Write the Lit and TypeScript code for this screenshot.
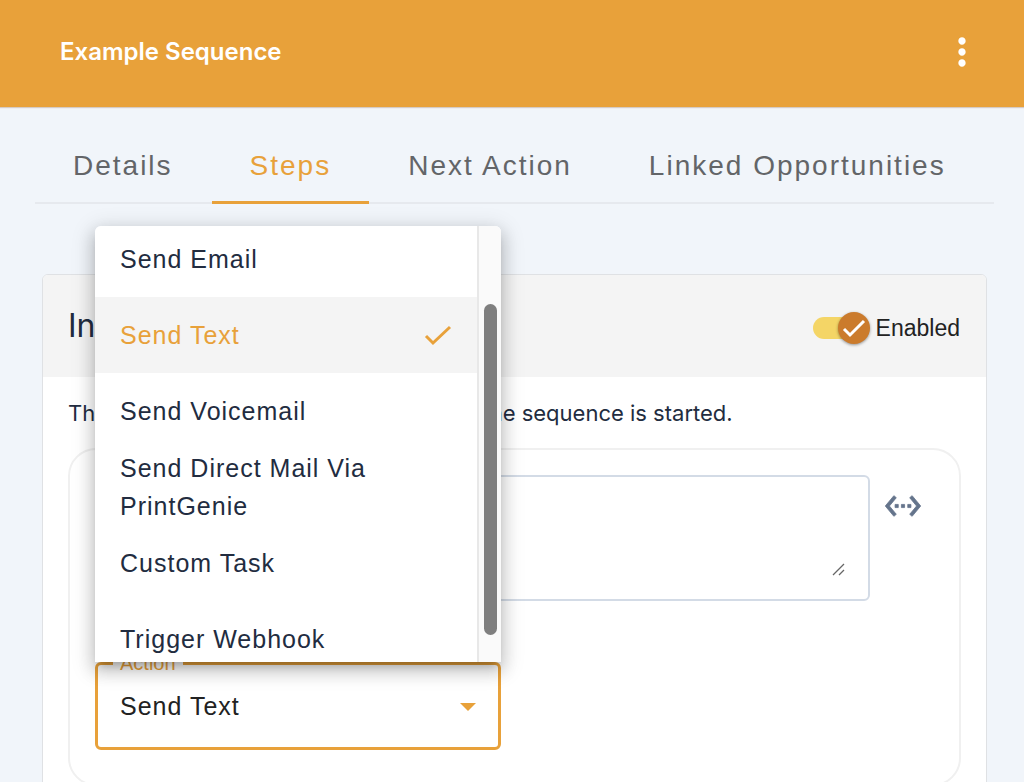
import { LitElement, html, css } from "lit";
import { customElement, state } from "lit/decorators.js";
import { classMap } from "lit/directives/class-map.js";

const TABS = ["Details", "Steps", "Next Action", "Linked Opportunities"];

const ACTIONS = [
  "Send Email",
  "Send Text",
  "Send Voicemail",
  "Send Direct Mail Via PrintGenie",
  "Custom Task",
  "Trigger Webhook",
];

@customElement("app-root")
export class AppRoot extends LitElement {
  @state() private tab = "Steps";
  @state() private action = "Send Text";
  @state() private enabled = true;

  static styles = css`
    :host {
      display: block;
      height: 100vh;
      overflow: hidden;
      background: #f1f5fa;
      color: #222c40;
      font-family: "Liberation Sans", Arial, sans-serif;
      font-size: 22px;
    }
    * {
      box-sizing: border-box;
    }
    button {
      font: inherit;
      color: inherit;
      border: 0;
      padding: 0;
      background: none;
      cursor: pointer;
    }
    h1,
    h2,
    p {
      margin: 0;
    }
    svg {
      display: block;
    }
    .bar {
      display: flex;
      align-items: center;
      justify-content: space-between;
      height: 107px;
      padding: 0 40px 4px 60px;
      background: #e8a13a;
      color: #fff;
      box-shadow: 0 1px 1px #d5cbc5;
    }
    .title {
      font-family: Inter, "Liberation Sans", sans-serif;
      font-size: 24px;
      line-height: 32px;
      font-weight: 600;
    }
    .tabs {
      display: flex;
      gap: 1px;
      margin: 21px 30px 0 35px;
      border-bottom: 2px solid #e6e9ee;
    }
    .tab {
      height: 76px;
      margin-bottom: -2px;
      padding: 3px 38px 0;
      border-bottom: 3px solid transparent;
      color: #636568;
      font-size: 28px;
      letter-spacing: 2px;
      white-space: nowrap;
    }
    .tab.active {
      color: #e8a13a;
      border-bottom-color: #e8a13a;
    }
    .panel {
      margin: 70px 37px 0 42px;
      border: 1px solid #dfe1e4;
      border-radius: 6px;
      background: #fff;
    }
    .panel-head {
      display: flex;
      align-items: center;
      justify-content: space-between;
      height: 102px;
      padding: 4px 26px 0 25px;
      border-radius: 5px 5px 0 0;
      background: #f4f4f4;
    }
    .panel-title {
      font-family: Inter, "Liberation Sans", sans-serif;
      font-size: 32px;
      line-height: 40px;
      padding-bottom: 4px;
      font-weight: 400;
    }
    .switch {
      display: flex;
      align-items: center;
      gap: 6px;
      color: #222;
      font-size: 23px;
      cursor: pointer;
    }
    .track {
      position: relative;
      display: flex;
      margin-right: 5px;
    }
    .toggle {
      appearance: none;
      width: 52px;
      height: 22px;
      margin: 0;
      border-radius: 11px;
      background: #f4d566;
    }
    .knob {
      position: absolute;
      right: -5px;
      top: -5px;
      width: 32px;
      height: 32px;
      padding: 3px;
      border-radius: 50%;
      background: #cb7b2c;
      box-shadow: 0 1px 3px rgba(0, 0, 0, 0.4);
      pointer-events: none;
    }
    .knob.off {
      right: 25px;
    }
    .panel-body {
      padding: 20px 25px 26px;
    }
    .note {
      font-family: Inter, "Liberation Sans", sans-serif;
      line-height: 32px;
      white-space: nowrap;
    }
    .step {
      margin-top: 19px;
      padding: 25px 25px 34px;
      border: 2px solid #f0f0f0;
      border-radius: 28px;
    }
    .message {
      display: flex;
      align-items: flex-start;
      gap: 14px;
    }
    .text-box {
      position: relative;
      display: flex;
      flex: 1;
    }
    textarea {
      width: 100%;
      height: 126px;
      padding: 20px 26px;
      border: 2px solid #d3dbe6;
      border-radius: 6px;
      background: #fff;
      font: inherit;
      color: inherit;
      resize: none;
      outline: 0;
    }
    .grip {
      position: absolute;
      right: 25px;
      bottom: 25px;
      pointer-events: none;
    }
    .merge {
      margin: 12px 12px 0 0;
      color: #64748b;
    }
    .field {
      position: relative;
      width: 406px;
      margin-top: 61px;
    }
    .field-label {
      position: absolute;
      left: 18px;
      top: -10px;
      padding: 0 7px;
      background: #fff;
      color: #e8a13a;
      font-size: 20px;
      line-height: 22px;
    }
    select {
      display: block;
      appearance: none;
      width: 100%;
      height: 88px;
      padding: 0 60px 0 22px;
      border: 3px solid #e8a13a;
      border-radius: 6px;
      background: #fff;
      color: #222;
      font: inherit;
      font-size: 25px;
      letter-spacing: 1px;
      outline: 0;
    }
    .caret {
      position: absolute;
      right: 25px;
      top: 41px;
      pointer-events: none;
    }
    .menu {
      position: absolute;
      left: 0;
      bottom: 88px;
      display: flex;
      width: 100%;
      height: 436px;
      overflow: hidden;
      border-radius: 6px 6px 0 0;
      background: #fff;
    }
    .menu-shadow {
      position: absolute;
      left: 0;
      bottom: 88px;
      width: 100%;
      height: 436px;
      border-radius: 6px 6px 0 0;
      box-shadow:
        0 8px 8px -5px rgba(0, 0, 0, 0.2),
        0 8px 16px 2px rgba(0, 0, 0, 0.14),
        0 5px 22px 4px rgba(0, 0, 0, 0.12);
    }
    .options {
      flex: 1;
      overflow: hidden;
    }
    .option {
      display: flex;
      align-items: center;
      justify-content: space-between;
      width: 100%;
      height: 76px;
      padding: 0 25px;
      font-size: 25px;
      line-height: 38px;
      letter-spacing: 1px;
      text-align: left;
    }
    .option.selected {
      background: #f4f4f4;
      color: #e8a13a;
    }
    .scroll {
      width: 24px;
      padding: 78px 5px 27px;
      border-left: 2px solid #e8e8e8;
      background: #fafafa;
    }
    .thumb {
      height: 331px;
      width: 13px;
      border-radius: 7px;
      background: #7f7f7f;
    }
  `;

  firstUpdated() {
    this.renderRoot.querySelector(".options")!.scrollTop = 5;
  }

  render() {
    return html`
      <header class="bar">
        <h1 class="title">Example Sequence</h1>
        <button aria-label="More options">
          <svg width="44" height="44" viewBox="0 0 24 24" fill="currentColor">
            <path
              d="M12 8c1.100 0 2-.9 2-2s-.9-2-2-2-2 .9-2 2 .9 2 2 2zm0 2c-1.100 0-2 .9-2 2s.9 2 2 2 2-.9 2-2-.9-2-2-2zm0 6c-1.100 0-2 .9-2 2s.9 2 2 2 2-.9 2-2-.9-2-2-2z"
            />
          </svg>
        </button>
      </header>
      <nav class="tabs" role="tablist">
        ${TABS.map(
          (t) => html`<button
            role="tab"
            aria-selected=${t === this.tab}
            class=${classMap({ tab: true, active: t === this.tab })}
            @click=${() => (this.tab = t)}
          >${t}</button>`
        )}
      </nav>
      <section class="panel">
        <div class="panel-head">
          <h2 class="panel-title">Initial</h2>
          <label class="switch">
            <span class="track">
              <input
                class="toggle"
                type="checkbox"
                .checked=${this.enabled}
                @change=${() => (this.enabled = !this.enabled)}
              />
              <span class=${classMap({ knob: true, off: !this.enabled })}>
                <svg width="26" height="26" viewBox="0 0 26 26" fill="none" stroke="#fff" stroke-width="3">
                  <path d="M3 14l6 6L23 6" />
                </svg>
              </span>
            </span>
            Enabled
          </label>
        </div>
        <div class="panel-body">
          <p class="note">This is the first action, and it runs when the sequence is started.</p>
          <div class="step">
            <div class="message">
              <div class="text-box">
                <textarea aria-label="Message"></textarea>
                <svg class="grip" width="13" height="13" viewBox="0 0 13 13" stroke="#666" stroke-width="1.300">
                  <path d="M1 12L12 1M7 12l5-5" />
                </svg>
              </div>
              <button class="merge" aria-label="Insert merge field">
                <svg
                  width="38"
                  height="38"
                  viewBox="0 0 24 24"
                  fill="currentColor"
                  stroke="currentColor"
                  stroke-width="0.500"
                >
                  <path
                    d="M7.770 6.760L6.230 5.480.820 12l5.410 6.520 1.540-1.280L3.420 12l4.350-5.240zM7 13h2v-2H7v2zm10-2h-2v2h2v-2zm-6 2h2v-2h-2v2zm6.770-7.520l-1.540 1.280L20.580 12l-4.350 5.240 1.540 1.280L23.180 12l-5.410-6.520z"
                  />
                </svg>
              </button>
            </div>
            <div class="field">
              <select id="action" .value=${this.action}>
                ${ACTIONS.map(
                  (a) => html`<option ?selected=${a === this.action}>${a}</option>`
                )}
              </select>
              <label class="field-label" for="action">Action</label>
              <svg class="caret" width="16" height="8" viewBox="0 0 16 8" fill="#e8a13a">
                <path d="M0 0h16L8 8z" />
              </svg>
              <div class="menu-shadow"></div>
              <div class="menu">
                <div class="options" role="listbox" aria-label="Action">
                  ${ACTIONS.map(
                    (a) => html`<button
                      role="option"
                      aria-selected=${a === this.action}
                      class=${classMap({ option: true, selected: a === this.action })}
                      @click=${() => (this.action = a)}
                    >
                      <span>${a}</span>
                      ${a === this.action
                        ? html`<svg width="28" height="21" viewBox="0 0 28 21" fill="none" stroke="currentColor" stroke-width="3">
                            <path d="M2 11l7 7L26 2" />
                          </svg>`
                        : ""}
                    </button>`
                  )}
                </div>
                <div class="scroll"><div class="thumb"></div></div>
              </div>
            </div>
          </div>
        </div>
      </section>
    `;
  }
}
